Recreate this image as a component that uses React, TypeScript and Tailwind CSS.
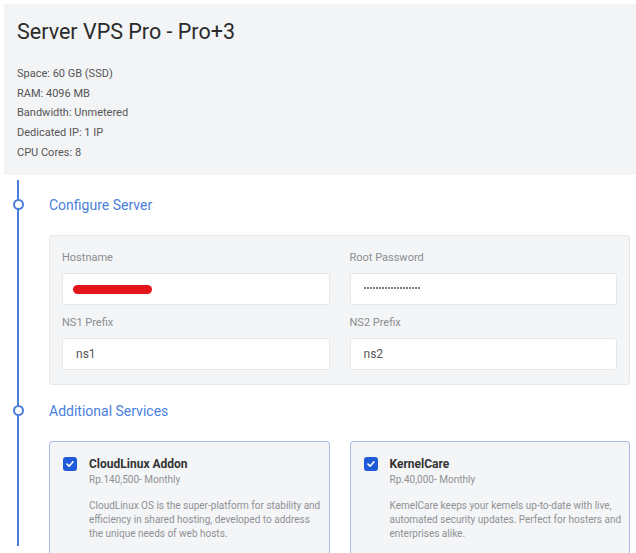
import React from "react";

const specs = [
  "Space: 60 GB (SSD)",
  "RAM: 4096 MB",
  "Bandwidth: Unmetered",
  "Dedicated IP: 1 IP",
  "CPU Cores: 8",
];

function Field({ label, children }: { label: string; children: React.ReactNode }) {
  return (
    <div className="flex flex-col">
      <div className="text-[11px] text-[#8a8d91] leading-[14px] mb-[8px]">{label}</div>
      <div className="h-[32px] bg-white border border-[#e6e7e9] rounded-[2px] flex items-center px-[13px] text-[12px] text-[#555]">
        {children}
      </div>
    </div>
  );
}

function PasswordDots() {
  return (
    <span className="flex gap-[1px] -mt-[2px]">
      {Array.from({ length: 19 }).map((_, i) => (
        <span key={i} className="w-[2px] h-[2px] rounded-full bg-[#555]" />
      ))}
    </span>
  );
}

function Addon({ title, price, desc }: { title: string; price: string; desc: string }) {
  return (
    <div className="border-[1.5px] border-[#a9bde8] rounded-[3px] bg-[#f4f5f7] h-[120px] pl-[13px] pr-[6px] pt-[14px] flex gap-[12px]">
      <div className="w-[14px] h-[14px] mt-[1px] rounded-[3px] bg-[#1f5ad9] flex items-center justify-center shrink-0">
        <svg width="10" height="10" viewBox="0 0 10 10">
          <path d="M2 5.2 L4.1 7.2 L8 2.8" fill="none" stroke="white" strokeWidth="1.7" strokeLinecap="round" strokeLinejoin="round" />
        </svg>
      </div>
      <div className="flex flex-col">
        <div className="text-[12px] font-bold text-[#333] leading-[16px]">{title}</div>
        <div className="text-[10px] text-[#8f9194] leading-[14px] mt-[1px]">{price}</div>
        <div className="text-[10px] text-[#8f9194] leading-[14px] mt-[12px]">{desc}</div>
      </div>
    </div>
  );
}

export default function App() {
  return (
    <div className="w-[636px] h-[553px] overflow-hidden bg-white" style={{ fontFamily: "Roboto, 'Liberation Sans', sans-serif" }}>
      <div className="ml-[4px] mt-[4px] bg-[#f3f4f5] h-[171px] pl-[13px] pt-[16px]">
        <h1 className="text-[21.5px] text-[#2b2b2b] leading-[24px]">Server VPS Pro - Pro+3</h1>
        <div className="mt-[20px] flex flex-col">
          {specs.map((s) => (
            <div key={s} className="text-[11px] text-[#555] leading-[19.7px]">{s}</div>
          ))}
        </div>
      </div>

      <div className="relative pl-[49px] pr-[6px]">
        <div className="absolute left-[17px] top-[5px] w-[2px] h-[366px] bg-[#4a7fdc]" />

        <div className="relative h-[60px] flex items-start pt-[20px]">
          <span className="absolute -left-[36px] top-[24px] w-[11px] h-[11px] rounded-full border-2 border-[#4a7fdc] bg-white" />
          <div className="text-[14px] text-[#4a7fdc] leading-[20px]">Configure Server</div>
        </div>

        <div className="bg-[#f4f5f6] border border-[#e6e7e9] rounded-[3px] h-[150px] px-[12px] pt-[15px] grid grid-cols-2 gap-x-[20px] gap-y-[11px] content-start">
          <Field label="Hostname">
            <span className="block w-[79px] h-[9px] rounded-full bg-[#e3141b] -ml-[3px]" />
          </Field>
          <Field label="Root Password">
            <PasswordDots />
          </Field>
          <Field label="NS1 Prefix">ns1</Field>
          <Field label="NS2 Prefix">ns2</Field>
        </div>

        <div className="relative h-[56px] pt-[16px]">
          <span className="absolute -left-[36px] top-[20px] w-[11px] h-[11px] rounded-full border-2 border-[#4a7fdc] bg-white" />
          <div className="text-[14px] text-[#4a7fdc] leading-[20px]">Additional Services</div>
        </div>

        <div className="grid grid-cols-2 gap-x-[20px]">
          <Addon
            title="CloudLinux Addon"
            price="Rp.140,500- Monthly"
            desc="CloudLinux OS is the super-platform for stability and efficiency in shared hosting, developed to address the unique needs of web hosts."
          />
          <Addon
            title="KernelCare"
            price="Rp.40,000- Monthly"
            desc="KernelCare keeps your kernels up-to-date with live, automated security updates. Perfect for hosters and enterprises alike."
          />
        </div>
      </div>
    </div>
  );
}
